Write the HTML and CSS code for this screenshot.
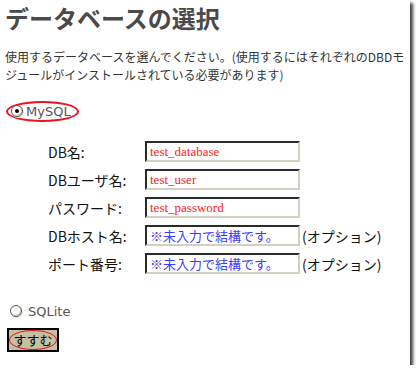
FILE: index.html
```html
<!DOCTYPE html>
<html lang="ja">
<head>
<meta charset="utf-8">
<link rel="stylesheet" href="styles.css">
</head>
<body>
<div class="page">
  <h1 class="title">データベースの選択</h1>
  <p class="intro">使用するデータベースを選んでください。(使用するにはそれぞれのDBDモジュールがインストールされている必要があります)</p>

  <div class="choice choice-mysql">
    <span class="mark">
      <span class="radio checked"></span><span class="latin">MySQL</span>
    </span>
  </div>

  <div class="fields">
    <div class="row"><span class="lbl">DB名:</span><span class="field"><span class="val red">test_database</span></span></div>
    <div class="row"><span class="lbl">DBユーザ名:</span><span class="field"><span class="val red">test_user</span></span></div>
    <div class="row"><span class="lbl">パスワード:</span><span class="field"><span class="val red">test_password</span></span></div>
    <div class="row"><span class="lbl">DBホスト名:</span><span class="field"><span class="val blue">※未入力で結構です。</span></span><span class="opt">(オプション)</span></div>
    <div class="row"><span class="lbl">ポート番号:</span><span class="field"><span class="val blue">※未入力で結構です。</span></span><span class="opt">(オプション)</span></div>
  </div>

  <div class="choice choice-sqlite">
    <span class="radio"></span><span class="latin">SQLite</span>
  </div>

  <div class="actions">
    <span class="btn"><span class="btn-mark">すすむ</span></span>
  </div>
</div>
</body>
</html>
```

FILE: styles.css
```css
html, body {
  margin: 0;
  padding: 0;
  background: #ffffff;
}
.page {
  width: 410px;
  height: 365px;
  background: #ffffff;
  box-shadow: 3px 3px 3px rgba(0, 0, 0, 0.75);
  font-family: "Noto Sans CJK JP", "Noto Sans", sans-serif;
  color: #222;
  box-sizing: border-box;
  padding-left: 5px;
  display: flex;
  flex-direction: column;
}
.title {
  margin: 0;
  font-size: 24px;
  line-height: 35px;
  font-weight: bold;
  color: #4a4a4a;
  white-space: nowrap;
}
.intro {
  margin: 13px 0 0 0;
  font-size: 12px;
  line-height: 18px;
  color: #333;
  width: 404px;
}
.choice {
  display: flex;
  align-items: center;
}
.choice-mysql {
  margin-top: 16px;
  height: 22px;
}
.mark {
  display: inline-flex;
  align-items: center;
  border: 2px solid #e8141e;
  border-radius: 50%;
  padding: 1px 6px 1px 3px;
  margin-left: 1px;
}
.radio {
  width: 10px;
  height: 10px;
  border-radius: 50%;
  border: 1px solid #555;
  box-shadow: inset -1px -1px 0 #d4d0c8, 1px 1px 0 #e8e4d8;
  background: #fff;
  position: relative;
  flex: none;
}
.radio.checked::after {
  content: "";
  position: absolute;
  left: 3px;
  top: 3px;
  width: 4px;
  height: 4px;
  border-radius: 50%;
  background: #000;
}
.latin {
  font-family: "DejaVu Sans", sans-serif;
  font-size: 13px;
  color: #555;
  margin-left: 3px;
}
.fields {
  margin-top: 19px;
  padding-left: 43px;
  display: flex;
  flex-direction: column;
  gap: 7px;
}
.row {
  display: flex;
  align-items: center;
  height: 21px;
  white-space: nowrap;
}
.lbl {
  width: 97px;
  font-size: 14px;
  color: #111;
}
.field {
  width: 155px;
  height: 21px;
  box-sizing: border-box;
  border-style: solid;
  border-width: 2px;
  border-color: #2a2a2a #d4d0c0 #d4d0c0 #2a2a2a;
  background: #fff;
  display: flex;
  align-items: center;
  padding-left: 3px;
}
.val {
  font-size: 13px;
  font-family: "Liberation Serif", "Noto Sans CJK JP", serif;
}
.red { color: #ff1a1a; }
.blue {
  color: #3a3aff;
  font-family: "Noto Sans CJK JP", sans-serif;
  font-size: 13px;
}
.opt {
  font-size: 14px;
  color: #111;
  margin-left: 2px;
}
.choice-sqlite {
  margin-top: 28px;
  padding-left: 5px;
  height: 18px;
}
.choice-sqlite .latin {
  margin-left: 6px;
}
.actions {
  margin-top: 6px;
  padding-left: 2px;
}
.btn {
  display: inline-flex;
  align-items: center;
  justify-content: center;
  width: 52px;
  height: 24px;
  box-sizing: border-box;
  background: #c4c0a4;
  border: 2px solid #000;
}
.btn-mark {
  font-size: 13px;
  color: #000;
  border: 1px solid #e8141e;
  border-radius: 50%;
  padding: 0 3px;
  line-height: 18px;
  white-space: nowrap;
}
```
